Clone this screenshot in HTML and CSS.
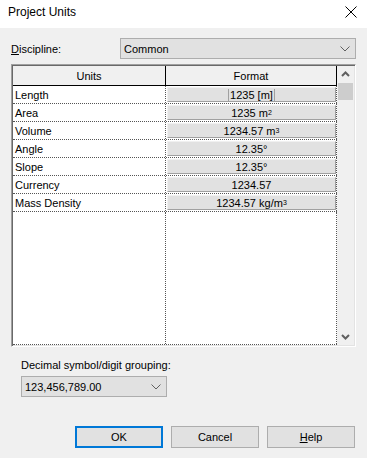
FILE: index.html
```html
<!DOCTYPE html>
<html>

<head>
    <link rel="stylesheet" href="styles.css">
</head>

<body>
    <div class="titlebar">
        <span class="title">Project Units</span>
        <svg class="close" width="12" height="12" viewBox="0 0 12 12">
            <path d="M0.5 0.5 L11.5 11.5 M11.5 0.5 L0.5 11.5" stroke="#000" stroke-width="1" fill="none" />
        </svg>
    </div>

    <div class="content">
        <div class="discipline">
            <label class="label"><u>D</u>iscipline:</label>
            <div class="combo wide">
                <span>Common</span>
                <svg width="10" height="6" viewBox="0 0 10 6">
                    <polyline points="0.5,0.5 5,5 9.5,0.5" stroke="#606060" fill="none" />
                </svg>
            </div>
        </div>

        <div class="grid">
            <div class="table">
                <div class="row head">
                    <div class="cell name">Units</div>
                    <div class="cell fmt">Format</div>
                </div>
                <div class="row">
                    <div class="cell name">Length</div>
                    <div class="cell fmt"><div class="box"><span class="caret">1235 [m]</span></div></div>
                </div>
                <div class="row">
                    <div class="cell name">Area</div>
                    <div class="cell fmt"><div class="box">1235 m<sup>2</sup></div></div>
                </div>
                <div class="row">
                    <div class="cell name">Volume</div>
                    <div class="cell fmt"><div class="box">1234.57 m<sup>3</sup></div></div>
                </div>
                <div class="row">
                    <div class="cell name">Angle</div>
                    <div class="cell fmt"><div class="box">12.35°</div></div>
                </div>
                <div class="row">
                    <div class="cell name">Slope</div>
                    <div class="cell fmt"><div class="box">12.35°</div></div>
                </div>
                <div class="row">
                    <div class="cell name">Currency</div>
                    <div class="cell fmt"><div class="box">1234.57</div></div>
                </div>
                <div class="row">
                    <div class="cell name">Mass Density</div>
                    <div class="cell fmt"><div class="box">1234.57 kg/m<sup>3</sup></div></div>
                </div>
                <div class="row filler">
                    <div class="cell name"></div>
                    <div class="cell fmt"></div>
                </div>
            </div>
            <div class="scrollbar">
                <svg class="arrow" width="17" height="17" viewBox="0 0 17 17">
                    <polyline points="5,10 8.5,6.5 12,10" stroke="#606060" stroke-width="2" fill="none" />
                </svg>
                <div class="thumb"></div>
                <div class="track"></div>
                <svg class="arrow" width="17" height="17" viewBox="0 0 17 17">
                    <polyline points="5,7 8.5,10.5 12,7" stroke="#606060" stroke-width="2" fill="none" />
                </svg>
            </div>
        </div>

        <div class="decimal">Decimal symbol/digit grouping:</div>
        <div class="combo small">
            <span>123,456,789.00</span>
            <svg width="10" height="6" viewBox="0 0 10 6">
                <polyline points="0.5,0.5 5,5 9.5,0.5" stroke="#606060" fill="none" />
            </svg>
        </div>

        <div class="buttons">
            <button class="btn default">OK</button>
            <button class="btn">Cancel</button>
            <button class="btn"><u>H</u>elp</button>
        </div>
    </div>
</body>

</html>
```

FILE: styles.css
```css
html {
    background: #f0f0f0;
}

body {
    margin: 0;
    width: 367px;
    height: 458px;
    overflow: hidden;
    font-family: "Liberation Sans", Arial, sans-serif;
    font-size: 11px;
    color: #000;
}

.titlebar {
    height: 28px;
    background: #fff;
    display: flex;
    justify-content: space-between;
    align-items: flex-start;
    padding: 5px 10px 0 8px;
    box-sizing: border-box;
}

.title {
    font-size: 12px;
    line-height: 15px;
}

.close {
    margin-top: 1px;
}

.content {
    padding: 0 11px 0 11px;
}

.discipline {
    display: flex;
    align-items: center;
    margin-top: 10px;
}

.label {
    width: 109px;
}

.combo {
    height: 21px;
    box-sizing: border-box;
    background: #e1e1e1;
    border: 1px solid #adadad;
    display: flex;
    align-items: center;
    justify-content: space-between;
    padding: 0 5px 0 3px;
}

.combo.wide {
    flex: 1;
}

.combo.small {
    width: 146px;
    margin: 4px 0 0 10px;
}

/* units grid */
.grid {
    margin-top: 5px;
    width: 345px;
    height: 283px;
    box-sizing: border-box;
    border: 1px solid;
    border-color: #a0a0a0 #fff #fff #a0a0a0;
    box-shadow: inset 1px 1px #696969, inset -1px -1px #e3e3e3;
    padding: 1px;
    display: flex;
    background: #fff;
}

.table {
    width: 324px;
    display: flex;
    flex-direction: column;
}

.row {
    display: flex;
    height: 18px;
    border-bottom: 1px dotted #555;
    box-sizing: border-box;
}

.cell {
    box-sizing: border-box;
    border-right: 1px dotted #555;
    display: flex;
    align-items: center;
}

.cell.name {
    width: 153px;
    padding-left: 2px;
}

.cell.fmt {
    flex: 1;
    padding: 1px 0 1px 1px;
}

.row.head {
    height: 20px;
    background: #f0f0f0;
    border-bottom: 1px solid #000;
}

.row.head .cell {
    justify-content: center;
    border-right: 1px solid #000;
    padding: 0;
}

.row.filler {
    flex: 1;
}

.box {
    width: 100%;
    height: 15px;
    box-sizing: border-box;
    background: #e1e1e1;
    border: 1px solid;
    border-color: #f0f0f0 #a0a0a0 #a0a0a0 #f0f0f0;
    display: flex;
    align-items: center;
    justify-content: center;
}

.caret {
    border-left: 1px solid #a0a0a0;
    border-right: 1px solid #a0a0a0;
    padding: 0 1px;
    line-height: 12px;
}

sup {
    font-size: 7px;
    line-height: 0;
    vertical-align: 5px;
}

.scrollbar {
    width: 17px;
    background: #f0f0f0;
    display: flex;
    flex-direction: column;
}

.arrow {
    display: block;
}

.thumb {
    height: 17px;
    margin: 0 1px;
    background: #cdcdcd;
}

.track {
    flex: 1;
}

.decimal {
    margin: 11px 0 0 10px;
    line-height: 14px;
}

.buttons {
    display: flex;
    justify-content: flex-end;
    gap: 8px;
    margin-top: 29px;
    padding-right: 1px;
}

.btn {
    width: 88px;
    height: 22px;
    box-sizing: border-box;
    background: #e1e1e1;
    border: 1px solid #adadad;
    font-family: "Liberation Sans", Arial, sans-serif;
    font-size: 11px;
    color: #000;
    padding: 0;
}

.btn.default {
    border: 2px solid #0078d7;
}
```
